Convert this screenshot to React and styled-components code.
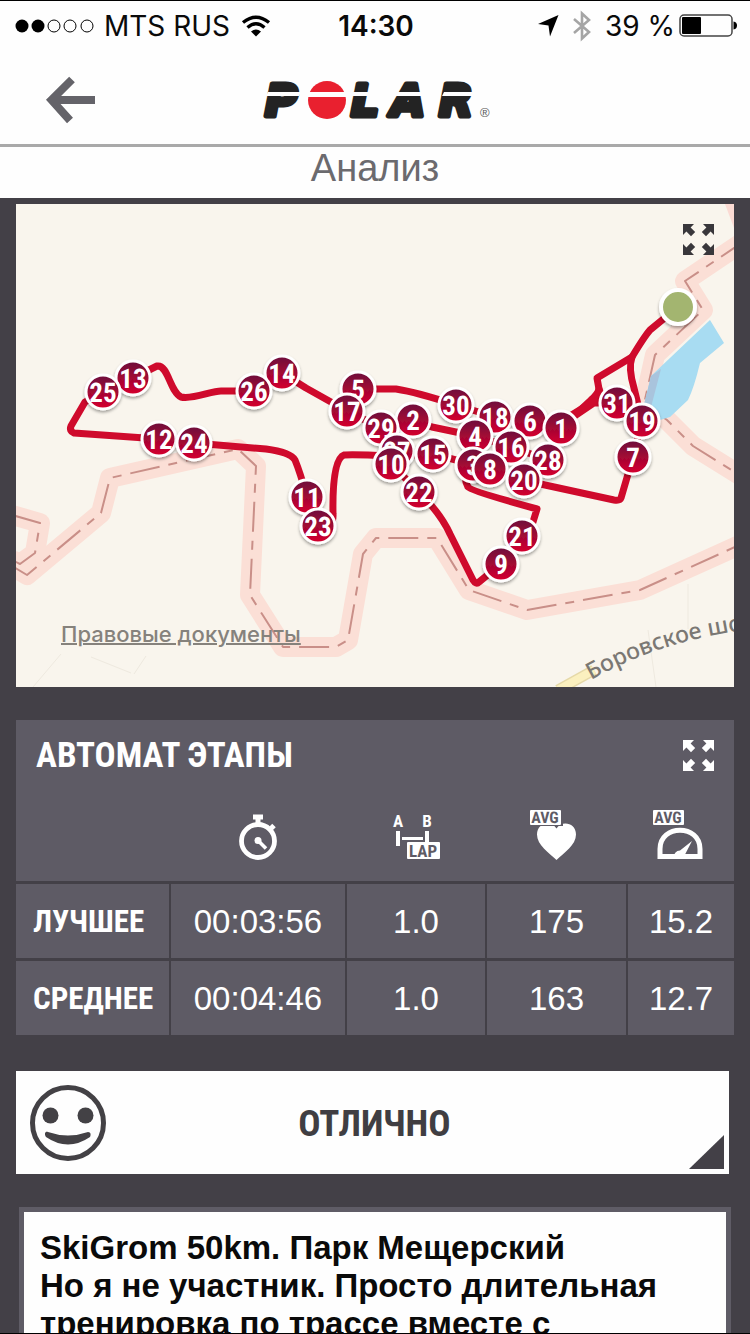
import React from 'react';
import styled, { createGlobalStyle } from 'styled-components';

const NARROW = "'Liberation Sans Narrow', 'Arial Narrow', 'Roboto Condensed', 'Liberation Sans', sans-serif";
const SANS = "'Liberation Sans', Arial, sans-serif";
const SYSTEM = "Inter, 'Noto Sans', sans-serif";

const GlobalStyle = createGlobalStyle`
  * {
    box-sizing: border-box;
  }

  body {
    margin: 0;
    background: #434047;
    font-family: ${SANS};
  }

  svg {
    overflow: visible;
    text-rendering: geometricPrecision;
  }
`;

const Screen = styled.div`
  display: flex;
  flex-direction: column;
  height: 100vh;
  overflow: hidden;
  border-top: 1px solid #000;
  border-bottom: 1px solid #000;
`;

const StatusBar = styled.div`
  display: grid;
  grid-template-columns: 1fr auto 1fr;
  align-items: center;
  height: 50px;
  padding: 0 13px 0 15px;
  background: #fefefe;
  color: #0a0a0a;
  font: 400 28px/32px ${SYSTEM};
  white-space: nowrap;
`;

const StatusGroup = styled.div`
  display: flex;
  align-items: center;
  justify-content: ${({ $end }) => ($end ? 'flex-end' : 'flex-start')};
  gap: ${({ $end }) => ($end ? '14px' : '10px')};
`;

const Charge = styled.span`
  display: flex;
  align-items: center;
  gap: 4px;
`;

const Clock = styled.time`
  font-weight: 600;
`;

const Header = styled.header`
  display: grid;
  grid-template-columns: 1fr auto 1fr;
  align-items: center;
  height: 96px;
  padding: 5px 45px 0;
  background: #fefefe;
  border-bottom: 3px solid #a9a9a9;
`;

const IconButton = styled.button`
  display: block;
  justify-self: start;
  padding: 0;
  border: 0;
  background: none;
  color: ${({ $dark }) => ($dark ? '#39373b' : '#fff')};
  line-height: 0;
  cursor: pointer;
`;

const PageTitle = styled.h1`
  height: 51px;
  margin: 0;
  background: #fefefe;
  color: #6b6a6e;
  font: 400 38px/42px ${SANS};
  text-align: center;
`;

const Content = styled.main`
  flex: 1;
  min-height: 0;
  padding: 6px 16px 0;
  overflow-y: auto;
  scrollbar-width: none;
`;

const MapCard = styled.section`
  position: relative;
  margin-bottom: 33px;
  overflow: hidden;
  background: #f9f5ed;

  > svg {
    display: block;
    width: 100%;
    height: auto;
  }
`;

const MapExpand = styled.div`
  position: absolute;
  top: 20px;
  right: 20px;
`;

const LegalLink = styled.a`
  position: absolute;
  left: 45px;
  bottom: 39px;
  color: #86827c;
  font: 500 22px/28px ${SYSTEM};
  text-decoration: underline;
  text-decoration-thickness: 2px;
`;

const LapsPanel = styled.section`
  margin-bottom: 36px;
  background: #5e5b65;
  color: #fff;
`;

const LapsHead = styled.div`
  display: flex;
  align-items: center;
  justify-content: space-between;
  height: 73px;
  padding: 0 20px 2px;
`;

const LapsTitle = styled.h2`
  margin: 0;
  font: 700 35px/42px ${NARROW};
`;

const LapsTable = styled.table`
  width: 100%;
  table-layout: fixed;
  border-spacing: 0;

  th,
  td {
    padding: 0;
    text-align: center;
  }

  thead th {
    height: 88px;
    line-height: 0;
  }

  tbody th,
  tbody td {
    height: 77px;
    padding-top: 2px;
    border-top: 3px solid #434047;
    font: 400 33px/38px ${SANS};
  }

  tbody td {
    border-left: 2px solid #434047;
  }

  tbody th {
    padding-left: 17px;
    font: 700 31px/38px ${NARROW};
    text-align: left;
  }
`;

const Mood = styled.section`
  position: relative;
  display: grid;
  grid-template-columns: 76px 1fr 72px;
  align-items: center;
  height: 103px;
  margin: 0 5px 33px 0;
  padding: 0 14px;
  background: #fefefe;
`;

const MoodSelect = styled.select`
  width: 100%;
  height: 60px;
  padding: 2px 0 0;
  border: 0;
  background: none;
  color: #403e42;
  font: 700 37px/44px ${NARROW};
  text-align: center;
  text-align-last: center;
  appearance: none;
`;

const MoodCorner = styled.span`
  position: absolute;
  right: 5px;
  bottom: 5px;
  width: 35px;
  height: 34px;
  background: #434047;
  clip-path: polygon(100% 0, 100% 100%, 0 100%);
  pointer-events: none;
`;

const Note = styled.p`
  min-height: 200px;
  margin: 0 3px;
  padding: 17px 16px;
  border: 5px solid #5f5c66;
  background: #fefefe;
  color: #0a0a0a;
  font: 700 33px/38px ${SANS};
`;

// Pins further south are drawn on top of the ones behind them.
const pins = [
  [25, 87, 188], [13, 117, 174], [12, 143, 235], [24, 178, 239], [26, 238, 187],
  [14, 266, 169], [5, 342, 185], [17, 331, 207], [29, 365, 224], [2, 397, 216],
  [30, 440, 201], [18, 479, 213], [6, 514, 217], [1, 545, 224], [31, 601, 199],
  [19, 626, 217], [7, 617, 253], [4, 459, 232], [16, 495, 243], [28, 532, 256],
  [27, 381, 247], [10, 375, 260], [15, 417, 250], [3, 457, 261], [8, 474, 265],
  [20, 508, 276], [22, 403, 288], [11, 291, 293], [23, 302, 322], [21, 506, 332],
  [9, 485, 360],
].sort((a, b) => a[2] - b[2]);

const borders = [
  'M-4 362 11 371 85 309 94 274 222 245 240 262 234 391 267 443H320L332 436 347 350 360 334H421L453 386 511 406 624 386 730 338',
  'M-4 311 24 319 19 349 4 360 -4 356',
  'M730 36 669 77 687 106 639 151 628 200 651 216 677 242 730 275',
];

const route = [
  'M662 103 634 126Q628 133 616 153L581 174 583 185Q582 190 575 196L545 224',
  'M616 153Q612 164 618 184L626 217 617 253 605 294Q604 297 598 296L529 281 508 276',
  'M583 185 586 193 601 199M590 199H575L554 212M585 194 554 215',
  'M545 224 514 217 479 213 440 201Q400 188 380 185H342L331 207',
  'M459 232 416 223 397 216 365 224 331 207 290 184 266 169 238 187H205C195 187 176 196 165 193 154 188 152 160 141 162L117 174 87 188 69 198 55 222Q53 227 58 229L143 235 178 239 250 245Q274 248 279 256 284 268 291 293L302 322Q318 325 317 310 316 255 328 251 335 250 375 252L417 250 440 256 457 261Q445 270 452 283 455 287 521 305L517 318 506 332 485 360 463 378Q460 381 457 376L434 330Q425 310 403 288L375 260 381 247 365 224',
  'M459 232 495 243 532 256 508 276 474 265 457 261M459 232 479 213M495 243 514 217',
];

const ExpandIcon = () => (
  <svg width="31" height="31" viewBox="0 0 31 31" fill="currentColor" aria-hidden="true">
    {[0, 90, 180, 270].map((angle) => (
      <path
        key={angle}
        d="M0 0H11L7.600 3.400 12.200 8 8 12.200 3.400 7.600 0 11Z"
        transform={`rotate(${angle} 15.5 15.5)`}
      />
    ))}
  </svg>
);

const SignalDots = () => (
  <svg width="79" height="14" viewBox="0 0 79 14" role="img" aria-label="Сигнал: 2 из 5">
    {[7, 23, 39, 55, 72].map((x, i) => (
      <circle key={x} cx={x} cy="7" r={i < 2 ? 6.5 : 6} fill={i < 2 ? '#000' : 'none'} stroke="#000" strokeWidth={i < 2 ? 0 : 1} />
    ))}
  </svg>
);

const WifiIcon = () => (
  <svg width="30" height="22" viewBox="-2 0 30 22" fill="none" stroke="#000" strokeWidth="3.400" aria-hidden="true">
    <path d="M1 7.500Q14 -3 27 7.500" />
    <path d="M5.500 12.500Q14 5 22.500 12.500" />
    <path d="M9 16.500Q14 12.500 19 16.500L14 21.500Z" fill="#000" stroke="none" />
  </svg>
);

const LocationIcon = () => (
  <svg width="21" height="22" viewBox="0 0 21 22" aria-hidden="true">
    <path d="M20.500 0 12 21.500 10.500 10.500 0 9Z" fill="#000" />
  </svg>
);

const BluetoothIcon = () => (
  <svg width="18" height="32" viewBox="0 0 18 32" fill="none" stroke="#a5a5a5" strokeWidth="2.600" aria-hidden="true">
    <path d="M1 9 16 22 9 28.500V3.500L16 10 1 23" />
  </svg>
);

const BatteryIcon = () => (
  <svg width="58" height="24" viewBox="0 0 58 24" aria-hidden="true">
    <rect x="1" y="1" width="52" height="21" rx="4" fill="none" stroke="#444" strokeWidth="1.500" />
    <rect x="3" y="3" width="19" height="17" rx="1" />
    <path d="M54.500 7.500Q58 8 58 11.500T54.500 15.500Z" />
  </svg>
);

const BackArrow = () => (
  <svg width="50" height="48" viewBox="0 0 50 48" fill="none" stroke="#646369" strokeWidth="8" aria-hidden="true">
    <path d="M27 3.500 6.500 24 25 44.500M6 24H50" />
  </svg>
);

const PolarLogo = () => (
  <svg width="236" height="40" viewBox="0 0 236 40" role="img" aria-label="POLAR">
    <g
      fill="#232323"
      stroke="#232323"
      strokeWidth="5"
      strokeLinejoin="round"
      fontFamily="'DejaVu Sans', sans-serif"
      fontSize="44"
      fontWeight="700"
      fontStyle="oblique"
    >
      <text x="8" y="36">P</text>
      <text x="94" y="36">L</text>
      <text x="134" y="36">A</text>
      <text x="182" y="36">R</text>
    </g>
    <circle cx="70" cy="20" r="19" fill="#e9202f" />
    <path d="M11 12H44L42 16H9ZM50 12H91V17H50ZM94 12H127V16H92ZM134 12H174V16H130ZM187 12H219V16H185Z" fill="#fefefe" />
    <text x="223" y="37" fill="#555" fontFamily="'Liberation Sans', sans-serif" fontSize="13">®</text>
  </svg>
);

const StopwatchIcon = () => (
  <svg width="50" height="54" viewBox="-1 -2 50 54" fill="none" stroke="#fff" role="img" aria-label="Время">
    <circle cx="25" cy="29" r="16.500" strokeWidth="4.800" />
    <path d="M20 5H30M25 5V13" strokeWidth="5" />
    <path d="M35.500 19 41 13.500" strokeWidth="5" />
    <path d="M25 28.500 33 36.500" strokeWidth="3.500" />
    <circle cx="25" cy="28.500" r="3.500" fill="#fff" stroke="none" />
  </svg>
);

const LapIcon = () => (
  <svg width="50" height="54" viewBox="-1 -2 50 54" fill="#fff" fontFamily={NARROW} fontWeight="700" textAnchor="middle" role="img" aria-label="Расстояние этапа">
    <text x="7" y="15" fontSize="17">A</text>
    <text x="36" y="15" fontSize="17">B</text>
    <path d="M5 19H9V34H5ZM34 19H38V30H34ZM11 25H32V28H11Z" />
    <rect x="16" y="30" width="33" height="17" rx="1" />
    <text x="32" y="45" fontSize="17" fill="#5e5b65">LAP</text>
  </svg>
);

const AvgTag = ({ x }) => (
  <g>
    <rect x={x} y="-2" width="31" height="15" rx="1" fill="#fff" />
    <text x={x + 15} y="11" fontFamily={NARROW} fontWeight="700" fontSize="16" textAnchor="middle" fill="#5e5b65">AVG</text>
  </g>
);

const HeartIcon = () => (
  <svg width="50" height="54" viewBox="0 -2 50 54" role="img" aria-label="Средний пульс">
    <path d="M25.500 48C18 41 6 33 6 22.500 6 11 20 8 25.500 16.500 31 8 45 11 45 22.500 45 33 33 41 25.500 48Z" fill="#fff" />
    <rect x="0" y="-2" width="32" height="16" fill="#5e5b65" />
    <AvgTag x={-1} />
  </svg>
);

const SpeedIcon = () => (
  <svg width="54" height="54" viewBox="-3 -2 54 54" role="img" aria-label="Средняя скорость">
    <path d="M4 44.500V37C4 12 44 12 44 37V44.500Z" fill="none" stroke="#fff" strokeWidth="5" />
    <path d="M36 29 29 42.500 27 45H18Q18 39 24 38.500Z" fill="#fff" />
    <AvgTag x={-3} />
  </svg>
);

const SmileIcon = () => (
  <svg width="76" height="76" viewBox="0 0 76 76" aria-hidden="true">
    <circle cx="38" cy="38" r="35.500" fill="none" stroke="#434145" strokeWidth="5" />
    <g fill="#434145">
      <circle cx="20.500" cy="30.500" r="8" />
      <circle cx="55.500" cy="30.500" r="8" />
      <path d="M18 47Q38 54 58 47C61 47 61 50 60 52Q38 67 16 52C14 49 15 46 18 47Z" />
    </g>
  </svg>
);

const RouteMap = () => (
  <svg viewBox="0 0 718 483" role="img" aria-label="Карта маршрута">
    <defs>
      <linearGradient id="pinFill" x1="0" y1="0" x2="0" y2="1">
        <stop offset="0" stopColor="#6c0f3c" />
        <stop offset="1" stopColor="#d8002d" />
      </linearGradient>
      <filter id="pinShadow" x="-20%" y="-20%" width="150%" height="150%">
        <feDropShadow dx="0" dy="2" stdDeviation="1.500" floodOpacity="0.350" />
      </filter>
      <path id="roadLine" d="M575 476Q650 434 740 425" />
    </defs>

    <g fill="none" stroke="#eee9df">
      <path d="M17 483 45 450M75 453 115 469M118 470 130 452M672 380V425M632 426 640 483" />
    </g>
    <path d="M709 0 718 24V0Z" fill="#fbdbd4" />

    <g fill="none" strokeLinejoin="round">
      {borders.map((d) => (
        <path key={d} d={d} stroke="#fbdfd6" strokeWidth="20" />
      ))}
      {borders.map((d) => (
        <path key={d} d={d} stroke="#c98f88" strokeWidth="2" strokeDasharray="30 9 9 9" />
      ))}
    </g>

    <path d="M694 116 708 139 684 159Q678 184 672 196L654 213 644 216 627 205 635 172Z" fill="#a8dcf2" />
    <path d="M635 172 645 165 634 207 627 205Z" fill="#a9c4dd" />

    <path d="M542 486 578 466" stroke="#e6d9a8" strokeWidth="11" />
    <path d="M542 486 578 466" stroke="#fbf0bf" strokeWidth="8" />
    <text fill="#7b7874" fontFamily="'Noto Sans', 'Open Sans', sans-serif" fontSize="23" fontWeight="500">
      <textPath href="#roadLine">Боровское шо</textPath>
    </text>

    <g fill="none" stroke="#cf0a2c" strokeWidth="7" strokeLinejoin="round" strokeLinecap="round">
      {route.map((d) => (
        <path key={d} d={d} />
      ))}
    </g>

    <circle cx="662" cy="103" r="17" fill="#a3b56f" stroke="#fff" strokeWidth="4" filter="url(#pinShadow)" />

    {pins.map(([label, x, y]) => (
      <g key={label}>
        <circle cx={x} cy={y} r="17" fill="url(#pinFill)" stroke="#fff" strokeWidth="3" filter="url(#pinShadow)" />
        <text x={x} y={y + 10} fill="#fff" fontFamily={NARROW} fontSize="27" fontWeight="700" textAnchor="middle">
          {label}
        </text>
      </g>
    ))}
  </svg>
);

const lapRows = [
  { label: 'ЛУЧШЕЕ', values: ['00:03:56', '1.0', '175', '15.2'] },
  { label: 'СРЕДНЕЕ', values: ['00:04:46', '1.0', '163', '12.7'] },
];

const columns = [153, 176, 140, 141, 108];

const App = () => (
  <Screen>
    <GlobalStyle />
    <StatusBar>
      <StatusGroup>
        <SignalDots />
        <span>MTS RUS</span>
        <WifiIcon />
      </StatusGroup>
      <Clock>14:30</Clock>
      <StatusGroup $end>
        <LocationIcon />
        <BluetoothIcon />
        <Charge>
          39 %
          <BatteryIcon />
        </Charge>
      </StatusGroup>
    </StatusBar>

    <Header>
      <IconButton aria-label="Назад">
        <BackArrow />
      </IconButton>
      <PolarLogo />
    </Header>
    <PageTitle>Анализ</PageTitle>

    <Content>
      <MapCard>
        <RouteMap />
        <MapExpand>
          <IconButton $dark aria-label="Развернуть карту">
            <ExpandIcon />
          </IconButton>
        </MapExpand>
        <LegalLink href="#legal">Правовые документы</LegalLink>
      </MapCard>

      <LapsPanel>
        <LapsHead>
          <LapsTitle>АВТОМАТ ЭТАПЫ</LapsTitle>
          <IconButton aria-label="Развернуть этапы">
            <ExpandIcon />
          </IconButton>
        </LapsHead>
        <LapsTable>
          <colgroup>
            {columns.map((width, i) => (
              <col key={i} width={width} />
            ))}
          </colgroup>
          <thead>
            <tr>
              <th />
              <th scope="col"><StopwatchIcon /></th>
              <th scope="col"><LapIcon /></th>
              <th scope="col"><HeartIcon /></th>
              <th scope="col"><SpeedIcon /></th>
            </tr>
          </thead>
          <tbody>
            {lapRows.map((row) => (
              <tr key={row.label}>
                <th scope="row">{row.label}</th>
                {row.values.map((value, i) => (
                  <td key={i}>{value}</td>
                ))}
              </tr>
            ))}
          </tbody>
        </LapsTable>
      </LapsPanel>

      <Mood>
        <SmileIcon />
        <MoodSelect aria-label="Ощущения" defaultValue="great">
          <option value="great">ОТЛИЧНО</option>
        </MoodSelect>
        <MoodCorner />
      </Mood>

      <Note>
        SkiGrom 50km. Парк Мещерский
        <br />
        Но я не участник. Просто длительная
        <br />
        тренировка по трассе вместе с
      </Note>
    </Content>
  </Screen>
);

export default App;
